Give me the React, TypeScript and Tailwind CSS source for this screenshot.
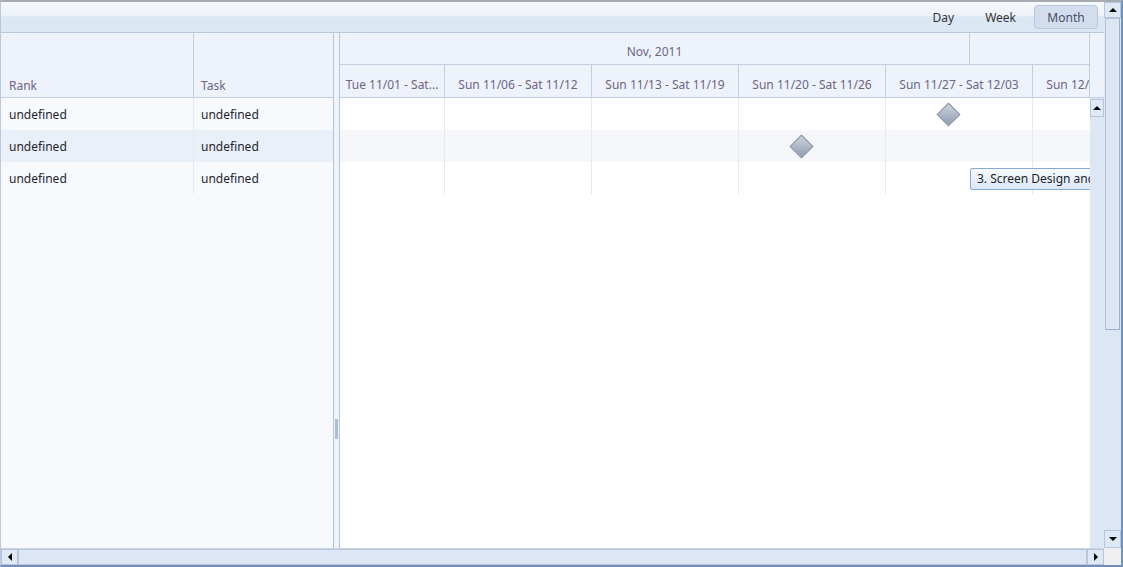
import React from 'react';

const weeks = [
  { label: 'Tue 11/01 - Sat...', w: 'w-[105px]' },
  { label: 'Sun 11/06 - Sat 11/12', w: 'w-[147px]' },
  { label: 'Sun 11/13 - Sat 11/19', w: 'w-[147px]' },
  { label: 'Sun 11/20 - Sat 11/26', w: 'w-[147px]' },
  { label: 'Sun 11/27 - Sat 12/03', w: 'w-[147px]' },
  { label: 'Sun 12/04 - Sat 12/10', w: 'w-[147px]' },
];

const rows = [
  { rank: 'undefined', task: 'undefined' },
  { rank: 'undefined', task: 'undefined' },
  { rank: 'undefined', task: 'undefined' },
];

// small black triangle for the scrollbar buttons
function Arrow({ dir }: { dir: 'up' | 'down' | 'left' | 'right' }) {
  const pts = {
    up: '0,4 4,0 8,4',
    down: '0,0 8,0 4,4',
    left: '4,0 4,8 0,4',
    right: '0,0 0,8 4,4',
  }[dir];
  const horiz = dir === 'left' || dir === 'right';
  return (
    <svg width={horiz ? 4 : 8} height={horiz ? 8 : 4} viewBox={horiz ? '0 0 4 8' : '0 0 8 4'}>
      <polygon points={pts} fill="#000" />
    </svg>
  );
}

function ScrollButton({ dir, className }: { dir: 'up' | 'down' | 'left' | 'right'; className: string }) {
  return (
    <div className={`flex items-center justify-center bg-[#dfe8f5] border border-[#b4c5dc] ${className}`}>
      <Arrow dir={dir} />
    </div>
  );
}

function Milestone({ left }: { left: string }) {
  return (
    <div className={`absolute top-[8px] ${left} w-[17px] h-[17px] rotate-45 border border-[#7d899c] bg-gradient-to-br from-[#cdd4de] to-[#8f9cb0]`} />
  );
}

export default function App() {
  return (
    <div
      className="w-[1123px] h-[567px] flex flex-col border-t-2 border-t-[#a7abb2] border-l border-l-[#b9c8db] border-r-2 border-r-[#7292c0] border-b-2 border-b-[#6f8fbf] bg-white overflow-hidden text-[12px]"
      style={{ fontFamily: '"Noto Sans", "Open Sans", sans-serif' }}
    >
      <div className="flex flex-1 min-h-0">
        {/* gantt main */}
        <div className="w-[1103px] flex flex-col">
          {/* toolbar */}
          <div className="h-[31px] flex items-center justify-end pr-[6px] pt-[2px] border-b border-[#b7c7dc] bg-[linear-gradient(#f7f9fc_0%,#edf2f9_45%,#dce7f4_50%,#dce7f4_100%)]">
            <span className="pl-[12px] pr-[15px] text-[#333] leading-[24px]">Day</span>
            <span className="px-[16px] text-[#333] leading-[24px] mr-[2px]">Week</span>
            <span className="w-[64px] h-[24px] -mt-[2px] pt-[2px] flex items-center justify-center rounded-[4px] border border-[#b8c8dc] bg-[#d2deed] text-[#4b4b6b]">Month</span>
          </div>

          <div className="flex flex-1 min-h-0">
            {/* left grid */}
            <div className="w-[332px] flex flex-col bg-[#f7f9fd]">
              <div className="h-[65px] flex border-b border-[#c2cfe0] bg-[#eef3fb] text-[#6d6486]">
                <div className="w-[193px] border-r border-[#c2cfe0] flex items-end pl-[8px] pb-[2px]">Rank</div>
                <div className="flex-1 flex items-end pl-[7px] pb-[2px]">Task</div>
              </div>
              {rows.map((r, i) => (
                <div key={i} className={`h-[32px] flex items-center text-[#1f1f2f] ${i === 1 ? 'bg-[#e9f0f8]' : ''}`}>
                  <div className="w-[193px] h-full flex items-center pl-[8px] pt-[2px] border-r border-[#e6ebf2]">{r.rank}</div>
                  <div className="flex-1 pl-[7px] pt-[2px]">{r.task}</div>
                </div>
              ))}
            </div>

            {/* splitter */}
            <div className="w-[7px] flex items-center justify-center border-x border-[#b4c4d9] bg-[#eff3fa]">
              <div className="w-[3px] h-[20px] mt-[276px] bg-[#a9bdd7]" />
            </div>

            {/* timeline */}
            <div className="flex-1 flex flex-col min-w-0">
              <div className="h-[65px] flex border-b border-[#c2cfe0] bg-[#eef3fb] text-[#6d6486]">
                <div className="w-[750px] overflow-hidden border-r border-[#c2cfe0]">
                  <div className="flex h-[32px] border-b border-[#c2cfe0] w-[900px]">
                    <div className="w-[630px] pt-[6px] border-r border-[#c2cfe0] flex items-center justify-center">Nov, 2011</div>
                    <div className="flex-1" />
                  </div>
                  <div className="flex h-[32px] w-[900px]">
                    {weeks.map((wk, i) => (
                      <div key={i} className={`${wk.w} shrink-0 pt-[7px] flex items-center justify-center border-r border-[#c2cfe0] whitespace-nowrap`}>
                        {wk.label}
                      </div>
                    ))}
                  </div>
                </div>
              </div>

              <div className="flex flex-1 min-h-0">
                <div className="w-[750px] relative overflow-hidden">
                  {rows.map((_, i) => (
                    <div key={i} className={`relative h-[32px] flex ${i === 1 ? 'bg-[#f5f7fa]' : ''}`}>
                      {weeks.map((wk, j) => (
                        <div key={j} className={`${wk.w} shrink-0 border-r border-[#e6e9ee]`} />
                      ))}
                      {i === 0 && <Milestone left="left-[600px]" />}
                      {i === 1 && <Milestone left="left-[453px]" />}
                      {i === 2 && (
                        <div className="absolute left-[630px] top-[6px] h-[22px] pl-[6px] pr-[10px] flex items-center whitespace-nowrap rounded-[2px] border border-[#88a9d4] bg-gradient-to-b from-[#f7fafe] to-[#dce8f7] text-[#1e1e2a]">
                          3. Screen Design and Prototyping
                        </div>
                      )}
                    </div>
                  ))}
                </div>
                {/* inner vertical scrollbar */}
                <div className="flex-1 bg-[#dce6f4] flex flex-col">
                  <ScrollButton dir="up" className="h-[18px] mt-[1px]" />
                </div>
              </div>
            </div>
          </div>
        </div>

        {/* outer vertical scrollbar */}
        <div className="flex-1 flex flex-col bg-[#dce6f4]">
          <ScrollButton dir="up" className="h-[16px]" />
          <div className="h-[312px] mx-[1px] border border-[#b1c2d8] border-r-[#9fb1ca] border-b-[#9fb1ca] bg-[#dde7f4]" />
          <div className="flex-1" />
          <ScrollButton dir="down" className="h-[18px]" />
        </div>
      </div>

      {/* bottom scrollbar row */}
      <div className="h-[17px] flex">
        <div className="w-[1103px] flex bg-[#dce6f4] border-t border-[#c5d3e5]">
          <ScrollButton dir="left" className="w-[17px]" />
          <div className="flex-1 border border-[#b7c7dc]" />
          <ScrollButton dir="right" className="w-[17px]" />
        </div>
        <div className="flex-1 bg-[#f0f0f0]" />
      </div>
    </div>
  );
}
